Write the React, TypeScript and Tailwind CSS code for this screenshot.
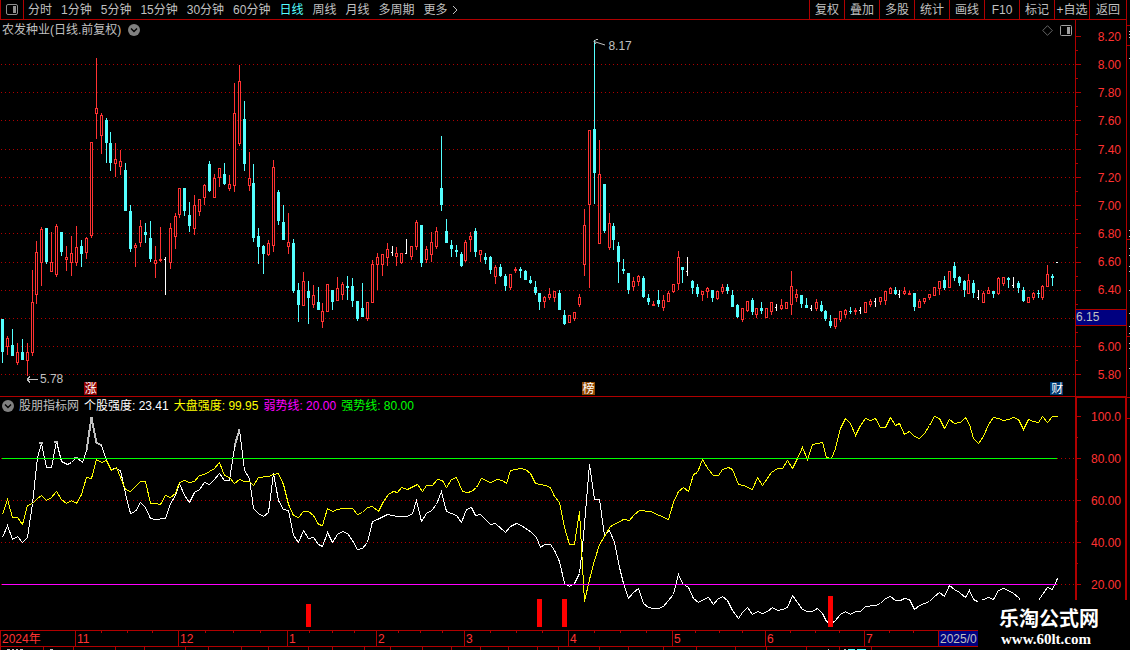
import React, { useState } from "react";

// r = up (hollow), c = down (filled), w = unchanged
// [kind, high, body top, body bottom, low]
type Candle = [string, number, number, number, number];

const candles: Candle[] = [
  ["c", 319, 319, 352, 363], ["r", 336, 338, 347, 355], ["c", 329, 345, 356, 356], ["r", 343, 352, 363, 365],
  ["c", 339, 352, 360, 360], ["r", 343, 352, 361, 376], ["r", 270, 302, 353, 356], ["r", 241, 252, 295, 304],
  ["r", 227, 229, 263, 286], ["c", 228, 228, 262, 264], ["r", 232, 262, 272, 272], ["r", 224, 226, 275, 277],
  ["c", 232, 232, 252, 256], ["r", 246, 257, 260, 271], ["r", 236, 253, 263, 276], ["r", 226, 247, 263, 266],
  ["c", 240, 246, 254, 267], ["r", 237, 238, 253, 259], ["r", 142, 142, 236, 238], ["r", 58, 108, 114, 139],
  ["r", 113, 115, 136, 154], ["c", 118, 120, 143, 163], ["c", 132, 143, 163, 171], ["r", 143, 159, 164, 177],
  ["r", 150, 161, 167, 175], ["c", 163, 170, 211, 211], ["c", 205, 211, 249, 252], ["r", 243, 245, 248, 267],
  ["r", 220, 226, 243, 247], ["c", 223, 232, 235, 243], ["c", 221, 238, 259, 262], ["r", 246, 260, 264, 278],
  ["r", 227, 259, 261, 262], ["w", 257, 259, 260, 295], ["r", 223, 228, 263, 269], ["r", 213, 216, 237, 249],
  ["r", 188, 188, 215, 218], ["c", 188, 188, 211, 216], ["c", 202, 215, 226, 232], ["r", 195, 205, 229, 235],
  ["r", 199, 199, 212, 216], ["r", 184, 185, 198, 205], ["c", 161, 164, 191, 192], ["r", 174, 178, 198, 198],
  ["r", 168, 168, 178, 187], ["c", 163, 174, 184, 185], ["r", 175, 184, 189, 191], ["r", 83, 113, 186, 192],
  ["r", 65, 81, 144, 146], ["c", 101, 119, 164, 171], ["r", 152, 178, 186, 191], ["c", 164, 183, 238, 242],
  ["c", 228, 236, 247, 264], ["c", 245, 246, 254, 274], ["r", 240, 243, 255, 256], ["r", 160, 167, 246, 252],
  ["c", 190, 192, 221, 225], ["c", 205, 222, 240, 240], ["r", 213, 242, 247, 254], ["c", 239, 243, 291, 293],
  ["c", 283, 290, 305, 322], ["r", 272, 281, 306, 306], ["c", 281, 291, 298, 324], ["r", 285, 295, 305, 308],
  ["c", 287, 302, 310, 310], ["r", 303, 311, 322, 328], ["r", 284, 284, 312, 312], ["c", 290, 290, 302, 310],
  ["r", 277, 288, 301, 301], ["r", 282, 284, 295, 300], ["c", 276, 286, 288, 300], ["c", 278, 286, 301, 307],
  ["c", 301, 301, 319, 321], ["c", 283, 308, 317, 317], ["r", 302, 302, 319, 321], ["r", 260, 264, 303, 303],
  ["r", 253, 257, 265, 290], ["r", 254, 254, 265, 276], ["r", 243, 249, 258, 266], ["w", 246, 252, 253, 256],
  ["r", 247, 253, 257, 266], ["r", 253, 253, 263, 264], ["w", 239, 253, 254, 254], ["r", 246, 246, 257, 260],
  ["r", 220, 222, 247, 250], ["c", 225, 225, 263, 267], ["r", 246, 249, 260, 263], ["r", 232, 242, 255, 262],
  ["r", 227, 231, 247, 249], ["c", 136, 188, 205, 211], ["c", 219, 231, 243, 243], ["c", 240, 245, 249, 257],
  ["c", 245, 250, 252, 257], ["c", 252, 254, 266, 267], ["r", 240, 242, 261, 262], ["r", 232, 236, 240, 252],
  ["c", 228, 231, 252, 257], ["r", 250, 250, 255, 262], ["c", 253, 257, 260, 264], ["c", 256, 257, 270, 274],
  ["r", 265, 267, 277, 284], ["c", 264, 267, 276, 277], ["c", 274, 276, 286, 291], ["r", 274, 274, 288, 290],
  ["r", 267, 269, 271, 273], ["c", 267, 269, 271, 278], ["c", 270, 271, 280, 280], ["c", 276, 280, 283, 284],
  ["c", 281, 287, 293, 295], ["c", 293, 293, 302, 310], ["r", 296, 297, 302, 308], ["r", 288, 294, 298, 300],
  ["r", 291, 291, 298, 302], ["c", 290, 293, 310, 310], ["c", 310, 315, 324, 325], ["r", 315, 315, 323, 323],
  ["r", 312, 312, 319, 321], ["r", 294, 297, 305, 307], ["r", 209, 225, 265, 276], ["r", 130, 130, 205, 288],
  ["c", 40, 129, 173, 204], ["r", 140, 174, 244, 244], ["c", 184, 184, 231, 233], ["r", 213, 223, 248, 250],
  ["c", 223, 226, 240, 250], ["c", 242, 246, 262, 283], ["c", 259, 269, 271, 274], ["c", 273, 273, 290, 294],
  ["r", 277, 281, 287, 291], ["r", 275, 276, 282, 286], ["c", 276, 278, 297, 298], ["c", 294, 298, 302, 305],
  ["r", 301, 304, 306, 306], ["c", 290, 300, 304, 307], ["r", 295, 300, 308, 311], ["r", 291, 293, 302, 302],
  ["r", 284, 284, 292, 293], ["r", 251, 257, 284, 290], ["c", 267, 267, 270, 283], ["w", 257, 271, 272, 276],
  ["c", 280, 281, 288, 294], ["c", 284, 287, 294, 297], ["r", 291, 291, 295, 301], ["r", 287, 288, 292, 298],
  ["c", 290, 290, 298, 302], ["r", 291, 291, 299, 300], ["r", 284, 287, 292, 294], ["c", 284, 287, 291, 294],
  ["c", 290, 295, 307, 307], ["c", 304, 305, 317, 318], ["r", 308, 308, 320, 322], ["r", 301, 301, 311, 312],
  ["c", 298, 300, 312, 315], ["r", 308, 308, 315, 318], ["c", 302, 308, 311, 314], ["r", 308, 308, 318, 318],
  ["r", 302, 302, 312, 315], ["w", 304, 307, 308, 311], ["r", 299, 305, 309, 310], ["r", 302, 302, 309, 309],
  ["r", 271, 286, 305, 315], ["r", 289, 294, 298, 302], ["c", 295, 295, 304, 308], ["c", 298, 305, 308, 308],
  ["w", 305, 308, 309, 311], ["r", 299, 302, 309, 311], ["c", 301, 305, 311, 312], ["c", 310, 311, 319, 321],
  ["c", 315, 321, 326, 328], ["r", 318, 318, 327, 329], ["r", 311, 311, 320, 322], ["r", 309, 310, 315, 318],
  ["c", 307, 311, 312, 314], ["r", 308, 310, 312, 315], ["w", 307, 310, 311, 314], ["r", 302, 302, 313, 313],
  ["r", 299, 301, 305, 307], ["w", 298, 301, 302, 307], ["r", 297, 297, 302, 305], ["r", 291, 291, 301, 305],
  ["r", 287, 288, 294, 294], ["c", 287, 290, 294, 295], ["w", 290, 294, 295, 298], ["r", 287, 291, 294, 295],
  ["r", 291, 293, 295, 295], ["c", 293, 293, 307, 311], ["r", 299, 301, 308, 308], ["r", 298, 298, 302, 304],
  ["r", 294, 294, 298, 300], ["r", 287, 287, 296, 296], ["r", 281, 281, 289, 295], ["c", 276, 280, 288, 290],
  ["r", 271, 271, 288, 288], ["c", 262, 266, 278, 281], ["c", 276, 277, 283, 286], ["c", 280, 281, 290, 297],
  ["r", 274, 280, 294, 294], ["c", 280, 283, 293, 298], ["w", 290, 297, 298, 300], ["r", 291, 293, 303, 303],
  ["r", 287, 290, 294, 294], ["c", 291, 291, 294, 298], ["r", 277, 278, 294, 295], ["r", 277, 277, 284, 286],
  ["c", 277, 278, 280, 288], ["w", 277, 285, 286, 288], ["c", 281, 283, 288, 293], ["c", 287, 290, 301, 302],
  ["r", 297, 297, 303, 303], ["r", 292, 293, 298, 300], ["c", 290, 293, 294, 298], ["r", 285, 286, 298, 300],
  ["r", 265, 274, 287, 287], ["c", 274, 276, 278, 286], ["w", 262, 262, 263, 263],
];

const stockLine =
  "2,537 7,525 12,539 17,536 22,542 27,537 32,503 37,457 41,443 46,467 51,467 56,441 61,461 67,464 71,462 76,457 82,462 86,450 91,417 96,442 101,445 106,460 111,469 115,468 120,470 125,493 130,513 135,511 140,502 145,507 150,518 155,519 165,518 170,503 175,495 179,483 184,495 189,502 194,492 199,489 204,482 209,484 214,479 219,473 224,480 229,480 234,447 239,429 244,470 249,478 253,508 258,513 263,516 268,512 273,473 278,500 283,509 288,510 293,535 298,542 303,530 308,538 313,537 318,544 322,546 327,532 332,542 337,534 342,531 347,533 352,540 357,549 362,548 367,542 372,521 377,519 387,514 397,516 407,516 412,513 416,500 421,521 426,513 431,510 436,504 441,491 446,511 456,515 461,522 466,509 471,507 475,515 480,514 490,524 495,523 505,532 510,526 516,523 521,525 531,532 536,537 540,547 544,544 550,544 554,550 559,561 564,583 569,586 574,583 579,573 582,547 589,464 594,499 599,499 604,535 609,530 614,542 619,567 623,583 628,598 633,592 638,588 643,603 648,607 653,608 658,608 663,606 668,600 673,594 678,574 682,583 688,587 693,598 698,602 703,599 708,597 713,604 717,599 722,596 727,600 732,610 738,618 742,612 747,607 752,614 757,611 762,613 767,611 772,607 777,610 782,609 787,607 792,595 797,602 802,609 807,611 812,611 817,608 822,613 826,621 830,623 834,621 840,614 845,611 850,614 855,611 860,611 865,606 875,605 880,603 885,598 890,596 895,600 900,600 904,598 909,599 914,609 919,605 929,601 934,596 939,592 944,596 949,585 954,589 959,592 965,597 969,590 973,599 977,601 983,599 988,597 993,599 998,590 1003,588 1008,590 1013,593 1018,597 1022,603 1028,604 1033,600 1038,600 1042,594 1047,587 1052,589 1057,578";

const marketLine =
  "2,514 7,499 12,517 17,517 22,524 27,505 32,503 37,498 41,495 46,500 51,497 56,491 61,499 66,503 71,500 76,503 81,494 86,477 91,478 96,459 101,462 106,460 111,470 116,467 120,477 125,489 130,491 135,486 140,481 145,481 150,503 155,503 160,504 165,495 170,497 175,493 179,482 184,480 189,482 194,481 199,475 204,474 214,468 219,462 224,475 229,477 234,483 239,479 244,481 249,481 253,485 258,477 268,476 273,474 278,473 283,484 288,504 293,515 298,517 303,511 308,511 313,515 318,524 322,525 327,508 332,511 337,509 342,508 352,508 357,514 362,512 367,507 372,506 378,511 383,501 388,494 393,491 397,492 401,487 407,489 417,484 422,491 426,485 432,485 437,479 442,480 446,487 451,479 456,477 462,491 467,492 471,491 476,487 481,478 490,482 497,479 502,480 506,483 510,470 520,468 525,469 530,473 535,483 540,484 545,485 550,487 554,496 559,502 564,527 569,544 574,544 579,511 584,601 589,579 594,560 599,544 604,536 610,526 623,519 629,520 634,514 639,510 650,511 668,519 673,502 678,491 683,487 688,491 693,474 697,472 702,459 708,469 713,475 718,475 722,469 728,467 732,469 738,484 743,485 752,489 757,477 762,485 771,472 777,468 782,468 787,460 792,468 797,458 802,447 807,459 812,444 817,443 822,442 826,457 831,458 835,448 840,428 845,418 850,423 855,435 860,425 865,418 870,420 875,418 880,427 885,427 890,417 895,425 899,423 904,434 909,431 914,436 919,438 924,433 929,425 934,416 939,418 944,428 949,419 954,423 960,422 965,417 969,424 973,438 978,443 983,436 988,424 993,417 998,418 1003,420 1008,419 1013,417 1018,419 1023,429 1028,419 1033,421 1038,422 1042,416 1047,422 1052,416 1057,416";

const periods = ["分时", "1分钟", "5分钟", "15分钟", "30分钟", "60分钟", "日线", "周线", "月线", "多周期", "更多"];
const tools = ["复权", "叠加", "多股", "统计", "画线", "F10", "标记", "+自选", "返回"];
const prices = ["8.20", "8.00", "7.80", "7.60", "7.40", "7.20", "7.00", "6.80", "6.60", "6.40", "", "6.00", "5.80"];
const levels = ["100.0", "80.00", "60.00", "40.00", "20.00"];
const priceGrid = [64, 92, 120, 149, 177, 205, 233, 262, 290, 318, 346, 374];

// label and width of every month on the time axis
const months = [
  { label: "2024年", span: 75, ticks: 0 },
  { label: "11", span: 103, ticks: 4 },
  { label: "12", span: 109, ticks: 4 },
  { label: "1", span: 89, ticks: 4 },
  { label: "2", span: 88, ticks: 4 },
  { label: "3", span: 104, ticks: 4 },
  { label: "4", span: 104, ticks: 4 },
  { label: "5", span: 93, ticks: 4 },
  { label: "6", span: 99, ticks: 4 },
  { label: "7", span: 74, ticks: 3 },
  { label: "2025/0", span: 188, ticks: 0 },
];
const totalSpan = months.reduce((sum, m) => sum + m.span, 0);

const footTicks = [0, 43, 73, 115, 144, 185, 208, 241, 268, 308, 332, 364, 390, 422, 451, 480, 508, 537, 558, 599, 628, 663, 696, 735, 766, 806, 839, 871];

const candleX = (i: number) => 5 * i + 2 - Math.floor((i + 8) / 14.57);

const CandleShape = ({ data, index }: { data: Candle; index: number }) => {
  const [kind, high, top, bottom, low] = data;
  const x = candleX(index);
  if (kind === "w") {
    return (
      <g fill="#fff">
        <rect x={x} y={high} width={1} height={low - high} />
        <rect x={x - 1} y={top} width={2} height={1} />
      </g>
    );
  }
  if (kind === "c") {
    return (
      <g fill="#54ffff">
        <rect x={x} y={high} width={1} height={low - high} />
        <rect x={x - 1} y={top} width={3} height={bottom - top} />
      </g>
    );
  }
  return (
    <g fill="#ff3232">
      <rect x={x} y={high} width={1} height={low - high} />
      <rect x={x - 1} y={top} width={3} height={bottom - top} />
      {bottom - top > 2 && <rect x={x} y={top + 1} width={1} height={bottom - top - 2} fill="#000" />}
    </g>
  );
};

const ChevronBadge = () => (
  <svg width="12" height="12" viewBox="0 0 12 12" aria-hidden="true">
    <circle cx="6" cy="6" r="6" fill="#808080" />
    <path d="M3 4.5 6 7.5 9 4.5" fill="none" stroke="#000" strokeWidth="1.4" />
  </svg>
);

const Header = () => {
  const [active, setActive] = useState("日线");
  return (
    <header className="flex h-5 justify-between border-b border-[#b00000]">
      <nav className="flex">
        <button aria-label="侧栏" className="mr-1 flex w-6 items-center justify-center border-x border-[#b00000]">
          <svg width="12" height="11" viewBox="0 0 12 11">
            <rect x="0.5" y="0.5" width="11" height="10" rx="1.5" fill="none" stroke="#909090" />
            <rect x="7" y="2" width="3" height="7" fill="#909090" />
          </svg>
        </button>
        <div className="flex items-center gap-[9px]">
          {periods.map((p) => (
            <button
              key={p}
              onClick={() => setActive(p)}
              className={active === p ? "leading-4 text-[#54ffff]" : "leading-4"}
            >
              {p}
              {p === "更多" && (
                <svg className="ml-1 inline-block align-[-1px]" width="6" height="10" viewBox="0 0 6 10">
                  <path d="M1 1 5 5 1 9" fill="none" stroke="#c0c0c0" />
                </svg>
              )}
            </button>
          ))}
        </div>
      </nav>
      <div className="flex">
        {tools.map((t) => (
          <button
            key={t}
            className="w-[35px] border-l border-[#b00000] text-center leading-4 whitespace-nowrap last:w-[37px]"
          >
            {t}
          </button>
        ))}
      </div>
    </header>
  );
};

const PricePane = () => (
  <section className="flex border-b border-[#b00000]">
    <div className="relative min-w-0 flex-1">
      <div className="flex h-[18px] items-end justify-between pr-[3px] pl-[2px]">
        <h1 className="flex items-center gap-[7px] leading-4">
          农发种业(日线.前复权)
          <ChevronBadge />
        </h1>
        <div className="flex h-4 items-center gap-[7px]">
          <svg width="11" height="11" viewBox="0 0 11 11">
            <path d="M5.5 0.7 10.3 5.5 5.5 10.3 0.7 5.5z" fill="none" stroke="#808080" strokeWidth="0.8" />
          </svg>
          <svg width="12" height="11" viewBox="0 0 12 11">
            <rect x="0.5" y="0.5" width="11" height="10" rx="1" fill="none" stroke="#a0a0a0" />
            <rect x="7" y="2" width="3" height="7" fill="#a0a0a0" />
          </svg>
        </div>
      </div>
      <svg
        className="block h-[358px] w-full"
        viewBox="0 38 1075 358"
        preserveAspectRatio="none"
        shapeRendering="crispEdges"
      >
        {priceGrid.map((y) => (
          <line key={y} x1="1" x2="1075" y1={y + 0.5} y2={y + 0.5} stroke="#b00000" strokeDasharray="1 3" />
        ))}
        {candles.map((c, i) => (
          <CandleShape key={i} data={c} index={i} />
        ))}
      </svg>
      <span className="absolute top-[18px] left-[55.2%] flex items-center gap-[3px] leading-4">
        <svg width="12" height="14" viewBox="0 0 12 14">
          <path d="M1 2.5 12 6M1 2.5 3 0.5H5M1 2.5 3 5" fill="none" stroke="#c0c0c0" />
        </svg>
        8.17
      </span>
      <span className="absolute top-[351px] left-[2.5%] flex items-center gap-[2px] leading-4">
        <svg width="11" height="7" viewBox="0 0 11 7" shapeRendering="crispEdges">
          <path d="M0 3.5H11M0 3.5 3 0.5M0 3.5 3 6.5" fill="none" stroke="#c0c0c0" />
        </svg>
        5.78
      </span>
      <span className="absolute bottom-px left-[7.8%] h-[13px] bg-[#900000] pl-px leading-[14px] text-white">涨</span>
      <span className="absolute bottom-px left-[54.1%] h-[13px] bg-[#904800] pl-px leading-[14px] text-white">榜</span>
      <span className="absolute bottom-px left-[97.7%] h-[13px] bg-[#003870] pl-px leading-[14px] text-white">财</span>
    </div>
    <div className="relative w-[51px] border-l border-[#b00000] pt-[10px] pr-[5px] text-right text-[#ff3232]">
      <ul className="flex h-[352px] flex-col justify-between">
        {prices.map((p, i) => (
          <li key={i} className="h-[14px] leading-[14px]">{p}</li>
        ))}
      </ul>
      <svg className="absolute top-0 left-0" width="6" height="376" viewBox="0 20 6 376" shapeRendering="crispEdges">
        {[36, ...priceGrid].map((y) => (
          <g key={y} fill="#b00000">
            <rect x="0" y={y} width="5" height="1" />
            {y < 374 && <rect x="0" y={y + 14} width="2" height="1" />}
          </g>
        ))}
      </svg>
      <span className="absolute inset-x-0 top-[289px] h-[17px] border-y border-[#b00000] bg-[#000080] text-left leading-[15px] text-[#c0c0c0]">
        6.15
      </span>
    </div>
  </section>
);

const IndicatorPane = () => (
  <section className="flex">
    <div className="min-w-0 flex-1">
      <div className="flex h-[17px] items-center gap-[5px] pl-[2px] leading-4">
        <ChevronBadge />
        <h2>股朋指标网</h2>
        <span className="text-white">个股强度: 23.41</span>
        <span className="text-[#ffff00]">大盘强度: 99.95</span>
        <span className="text-[#ff00ff]">弱势线: 20.00</span>
        <span className="text-[#00ff00]">强势线: 80.00</span>
      </div>
      <svg
        className="block h-[216px] w-full"
        viewBox="0 414 1075 216"
        preserveAspectRatio="none"
        shapeRendering="crispEdges"
      >
        {[458, 500, 542, 584].map((y) => (
          <line key={y} x1="1" x2="1075" y1={y + 0.5} y2={y + 0.5} stroke="#b00000" strokeDasharray="1 3" />
        ))}
        <g fill="none" transform="translate(0.5 0.5)">
          <polyline points={stockLine} stroke="#fff" />
          <polyline points={marketLine} stroke="#ffff00" />
          <path d="M38 442h4M53 441h4M73 457h4M86 450 91 417 96 442 101 445M234 446 239 429" stroke="#c0c0c0" strokeWidth="2" />
        </g>
        <rect x="2" y="458" width="1055" height="1" fill="#00ff00" />
        <rect x="2" y="584" width="1055" height="1" fill="#ff00ff" />
        <g fill="#ff0000">
          <rect x="306" y="604" width="5" height="23" />
          <rect x="537" y="599" width="5" height="28" />
          <rect x="562" y="599" width="5" height="28" />
          <rect x="828" y="596" width="5" height="31" />
        </g>
      </svg>
    </div>
    <div className="relative w-[51px] border-t border-r border-l-2 border-[#b00000] pt-3 pr-1 text-right text-[#ff3232]">
      <ul className="flex h-[182px] flex-col justify-between">
        {levels.map((l) => (
          <li key={l} className="h-[14px] leading-[14px]">{l}</li>
        ))}
      </ul>
      <svg className="absolute top-0 left-0" width="5" height="200" viewBox="0 398 5 200" shapeRendering="crispEdges">
        {[416, 458, 500, 542, 584].map((y) => (
          <g key={y} fill="#b00000">
            <rect x="0" y={y} width="4" height="1" />
            {y < 584 && <rect x="0" y={y + 21} width="1" height="1" />}
          </g>
        ))}
      </svg>
    </div>
  </section>
);

const TimeAxis = () => (
  <footer>
    <ol className="flex h-[17px] border-y border-[#b00000] leading-4 text-[#ff3232]">
      {months.map((m) => (
        <li
          key={m.label}
          className={
            m.label === "2025/0"
              ? "relative border-l border-[#b00000] bg-[#000080] pl-px text-[#c0c0c0]"
              : "relative border-l border-[#b00000] pl-px"
          }
          style={{ width: `${(m.span / totalSpan) * 100}%` }}
        >
          {m.label}
          <span className="absolute inset-x-0 top-0 flex h-[2px]">
            {Array.from({ length: m.ticks }, (_, i) => (
              <i key={i} className="flex-1 border-r border-[#b00000] last:border-r-0" />
            ))}
          </span>
        </li>
      ))}
    </ol>
    <svg
      className="block h-[3px] w-full"
      viewBox="0 647 1126 3"
      preserveAspectRatio="none"
      shapeRendering="crispEdges"
    >
      {footTicks.map((x) => (
        <rect key={x} x={x} y="647" width="1" height="3" fill="#b00000" />
      ))}
      <path d="M7 649.5h3M12 649.5h2M16 649.5h2M20 649.5h3M50 649.5h3M828 649.5h1M844 649.5h2" stroke="#c0c0c0" />
      <path d="M848 649.5h7M857 649.5h9" stroke="#54ffff" />
    </svg>
  </footer>
);

export default function App() {
  return (
    <div className="relative flex min-h-screen bg-black font-['Liberation_Sans','Noto_Sans_CJK_SC',sans-serif] text-xs text-[#c0c0c0]">
      <main className="min-w-0 flex-1">
        <Header />
        <PricePane />
        <IndicatorPane />
        <TimeAxis />
      </main>
      <aside className="w-1 border-l border-[#b00000]">
        <svg className="block" width="3" height="600" viewBox="0 0 3 600" shapeRendering="crispEdges">
          {[25, 45, 239, 336, 397, 418].map((y) => (
            <rect key={y} x="0" y={y} width="3" height="1" fill="#b00000" />
          ))}
          {[31, 34, 37, 58, 230, 236, 248, 255, 266, 271, 290, 313, 326, 333, 343, 348, 368].map((y) => (
            <rect key={y} x="2" y={y} width="1" height="1" fill="#c0c0c0" />
          ))}
        </svg>
      </aside>
      <div className="absolute right-0 bottom-0 h-[50px] w-[152px] bg-black pt-2 pl-[21px] font-bold text-white">
        <p className="text-[20px] leading-[22px]">乐淘公式网</p>
        <a
          href="#"
          className="block pl-[2px] font-['Liberation_Serif',serif] text-[15px] leading-[18px]"
        >
          www.60lt.com
        </a>
      </div>
    </div>
  );
}
